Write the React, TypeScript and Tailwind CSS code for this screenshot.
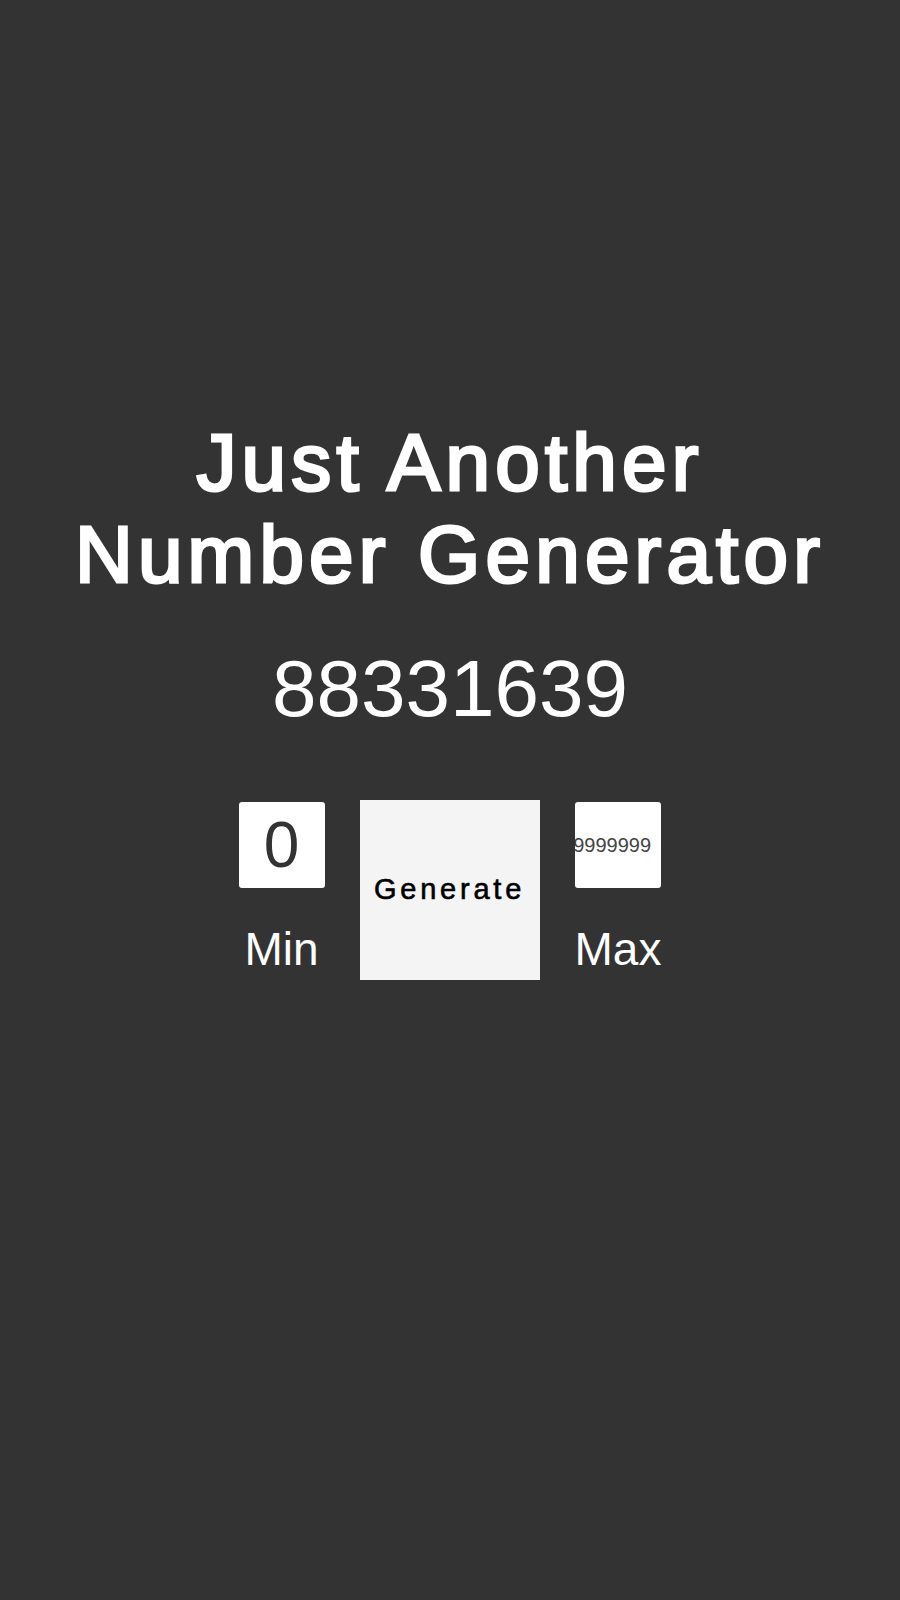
import React from 'react';

function App() {
  return (
    <div className="min-h-screen bg-[#333333] flex flex-col items-center pt-[417px] text-white font-['Liberation_Sans',Arial,sans-serif]">
      <h1 className="text-[80px] font-normal leading-[92px] tracking-[0.065em] text-center [-webkit-text-stroke:3px_white]">
        Just Another
        <br />
        Number Generator
      </h1>

      <div className="mt-[48px] text-[80px] leading-none">88331639</div>

      <div className="mt-[71px] flex items-start gap-[35px]">
        <div className="flex flex-col items-center">
          <div className="mt-[2px] w-[86px] h-[86px] bg-white rounded-[3px] flex items-center justify-center text-[64px] leading-none text-[#333333]">
            0
          </div>
          <div className="mt-[38px] text-[46px] leading-none">Min</div>
        </div>

        <button className="w-[180px] h-[180px] bg-[#f4f4f4] text-black text-[29px] font-normal tracking-[0.13em] [-webkit-text-stroke:0.6px_black] flex items-center justify-center">
          Generate
        </button>

        <div className="flex flex-col items-center">
          <div className="mt-[2px] w-[86px] h-[86px] bg-white rounded-[3px] flex items-center justify-end overflow-hidden pr-[10px] text-[20px] leading-none text-[#444444]">
            <span className="shrink-0">99999999</span>
          </div>
          <div className="mt-[38px] text-[46px] leading-none">Max</div>
        </div>
      </div>
    </div>
  );
}

export default App;
